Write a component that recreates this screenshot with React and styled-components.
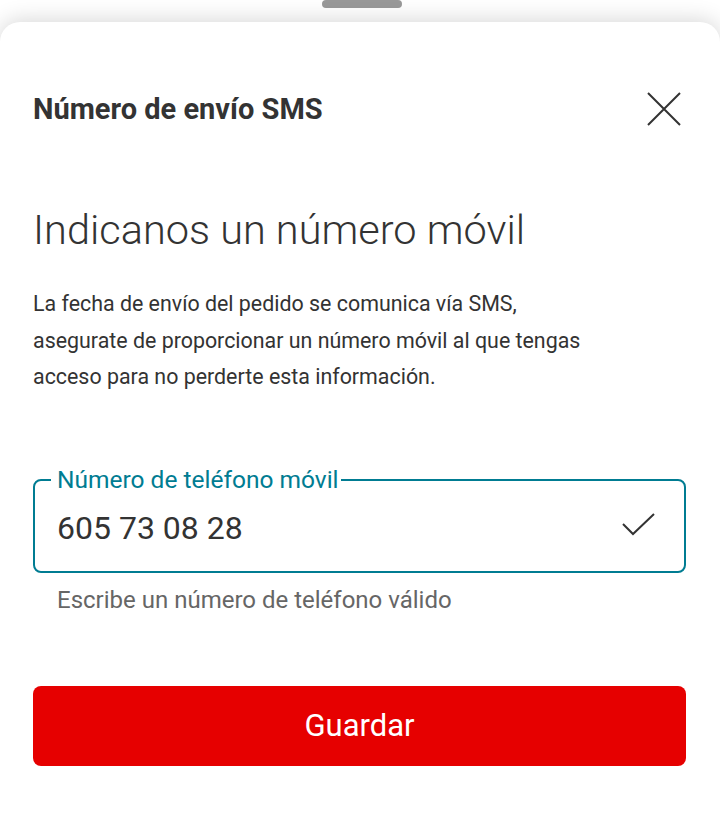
import React from "react";
import styled, { createGlobalStyle } from "styled-components";

const Global = createGlobalStyle`
  html, body { margin: 0; padding: 0; background: #ffffff; }
  body { font-family: "Roboto", "Liberation Sans", sans-serif; color: #333333; }
  * { box-sizing: border-box; }
`;

const Page = styled.div`
  width: 720px;
  height: 814px;
  display: flex;
  flex-direction: column;
  overflow: hidden;
  background: #ffffff;
`;

const HandleArea = styled.div`
  height: 22px;
  display: flex;
  justify-content: center;
  align-items: flex-start;
`;

const Handle = styled.div`
  width: 80px;
  height: 8px;
  margin-left: 4px;
  border-radius: 4px;
  background: #999999;
`;

const Sheet = styled.div`
  flex: 1;
  background: #ffffff;
  border-radius: 20px 20px 0 0;
  box-shadow: 0 -2px 22px rgba(0, 0, 0, 0.16);
  padding: 0 34px 0 33px;
  display: flex;
  flex-direction: column;
`;

const Header = styled.div`
  height: 42px;
  margin-top: 66px;
  display: flex;
  align-items: center;
  justify-content: space-between;
`;

const Title = styled.h2`
  margin: 0;
  font-size: 29px;
  font-weight: 700;
  color: #333333;
`;

const CloseButton = styled.button`
  width: 36px;
  height: 36px;
  margin-right: 4px;
  padding: 0;
  border: 0;
  background: transparent;
  display: flex;
  align-items: center;
  justify-content: center;
`;

const Heading = styled.h1`
  margin: 74px 0 0;
  font-size: 41.5px;
  font-weight: 300;
  line-height: 52px;
  color: #333333;
`;

const Body = styled.p`
  margin: 30px 0 0;
  max-width: 600px;
  font-size: 21.4px;
  line-height: 36.5px;
  color: #333333;
`;

const Field = styled.fieldset`
  margin: 70px 0 0;
  padding: 14px 28px 0 22px;
  height: 107px;
  border: 2px solid #007c92;
  border-radius: 8px;
`;

const Legend = styled.legend`
  margin-left: -6px;
  padding: 0 2px 0 6px;
  font-size: 24.5px;
  line-height: 28px;
  color: #007c92;
`;

const InputRow = styled.div`
  height: 40px;
  display: flex;
  align-items: center;
  justify-content: space-between;
`;

const Value = styled.span`
  font-size: 32px;
  line-height: 40px;
  color: #333333;
`;

const CheckIcon = styled.svg`
  margin-top: -6px;
`;

const Helper = styled.div`
  margin: 13px 0 0 24px;
  font-size: 24px;
  line-height: 28px;
  color: #666666;
`;

const SaveButton = styled.button`
  margin-top: 72px;
  height: 80px;
  width: 100%;
  border: 0;
  border-radius: 8px;
  background: #e60000;
  color: #ffffff;
  font-family: inherit;
  font-size: 31px;
`;

export default function App() {
  return (
    <>
      <Global />
      <Page>
        <HandleArea>
          <Handle />
        </HandleArea>
        <Sheet>
          <Header>
            <Title>Número de envío SMS</Title>
            <CloseButton aria-label="Cerrar">
              <svg width="36" height="36" viewBox="0 0 36 36">
                <path d="M2 2 L34 34 M34 2 L2 34" stroke="#333" strokeWidth="2" fill="none" />
              </svg>
            </CloseButton>
          </Header>
          <Heading>Indicanos un número móvil</Heading>
          <Body>
            La fecha de envío del pedido se comunica vía SMS,
            <br />
            asegurate de proporcionar un número móvil al que tengas acceso para no perderte esta información.
          </Body>
          <Field>
            <Legend>Número de teléfono móvil</Legend>
            <InputRow>
              <Value>605 73 08 28</Value>
              <CheckIcon width="34" height="24" viewBox="0 0 34 24">
                <path d="M1 11 L11 21 L32 1" stroke="#333" strokeWidth="2" fill="none" />
              </CheckIcon>
            </InputRow>
          </Field>
          <Helper>Escribe un número de teléfono válido</Helper>
          <SaveButton>Guardar</SaveButton>
        </Sheet>
      </Page>
    </>
  );
}
